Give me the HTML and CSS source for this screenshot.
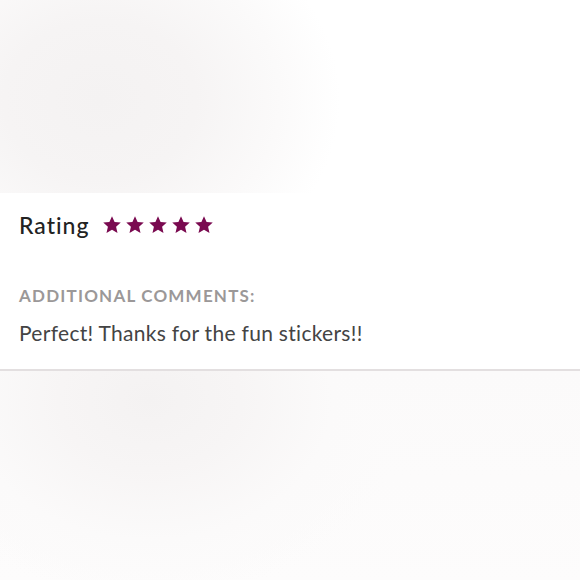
FILE: index.html
```html
<!DOCTYPE html>
<html>
<head>
<meta charset="utf-8">
<link rel="stylesheet" href="styles.css">
</head>
<body>
<div class="photo photo-top"></div>
<section class="review">
  <div class="rating-row">
    <span class="rating-label">Rating</span>
    <span class="stars">
      <svg class="star" viewBox="0 0 24 24"><path d="M12 1.5l3.1 6.9 7.4.7-5.6 5 1.7 7.4L12 17.6l-6.6 3.9 1.7-7.4-5.6-5 7.4-.7z"/></svg>
      <svg class="star" viewBox="0 0 24 24"><path d="M12 1.5l3.1 6.9 7.4.7-5.6 5 1.7 7.4L12 17.6l-6.6 3.9 1.7-7.4-5.6-5 7.4-.7z"/></svg>
      <svg class="star" viewBox="0 0 24 24"><path d="M12 1.5l3.1 6.9 7.4.7-5.6 5 1.7 7.4L12 17.6l-6.6 3.9 1.7-7.4-5.6-5 7.4-.7z"/></svg>
      <svg class="star" viewBox="0 0 24 24"><path d="M12 1.5l3.1 6.9 7.4.7-5.6 5 1.7 7.4L12 17.6l-6.6 3.9 1.7-7.4-5.6-5 7.4-.7z"/></svg>
      <svg class="star" viewBox="0 0 24 24"><path d="M12 1.5l3.1 6.9 7.4.7-5.6 5 1.7 7.4L12 17.6l-6.6 3.9 1.7-7.4-5.6-5 7.4-.7z"/></svg>
    </span>
  </div>
  <div class="comments-label">Additional comments:</div>
  <p class="comment">Perfect! Thanks for the fun stickers!!</p>
</section>
<div class="photo photo-bottom"></div>
</body>
</html>
```
FILE: styles.css
```css
html, body {
  margin: 0;
  padding: 0;
  background: #ffffff;
}
body {
  width: 580px;
  height: 580px;
  overflow: hidden;
  font-family: Lato, "Open Sans", sans-serif;
}
.photo-top {
  height: 193px;
  background: radial-gradient(ellipse 240px 200px at 100px 100px, #f4f2f2 0%, #f6f4f4 40%, #fbfafa 75%, #ffffff 100%);
}
.review {
  padding: 16px 19px 0 19px;
  height: 160px;
  border-bottom: 2px solid #e3dfe0;
}
.rating-row {
  display: flex;
  align-items: center;
  height: 32px;
}
.rating-label {
  font-size: 23px;
  letter-spacing: 1px;
  color: #222222;
  font-weight: 500;
  margin-right: 13px;
}
.stars {
  display: flex;
  gap: 3px;
}
.star {
  width: 20px;
  height: 20px;
  fill: #7a0a50;
}
.comments-label {
  margin-top: 44px;
  font-size: 17px;
  font-weight: 700;
  letter-spacing: 1.2px;
  text-transform: uppercase;
  color: #9b9898;
}
.comment {
  margin: 14px 0 0 0;
  font-size: 21px;
  letter-spacing: 0.3px;
  color: #444444;
}
.photo-bottom {
  height: 215px;
  background:
    radial-gradient(ellipse 260px 200px at 150px 400px, #f4f2f2 0%, #f7f5f5 35%, #fbfafa 70%, rgba(255,255,255,0) 100%),
    linear-gradient(180deg, #fbfafa 0%, #fdfcfc 100%);
  background-position: 0 -371px, 0 0;
  background-size: 580px 1000px, 100% 100%;
  background-repeat: no-repeat;
}
```
